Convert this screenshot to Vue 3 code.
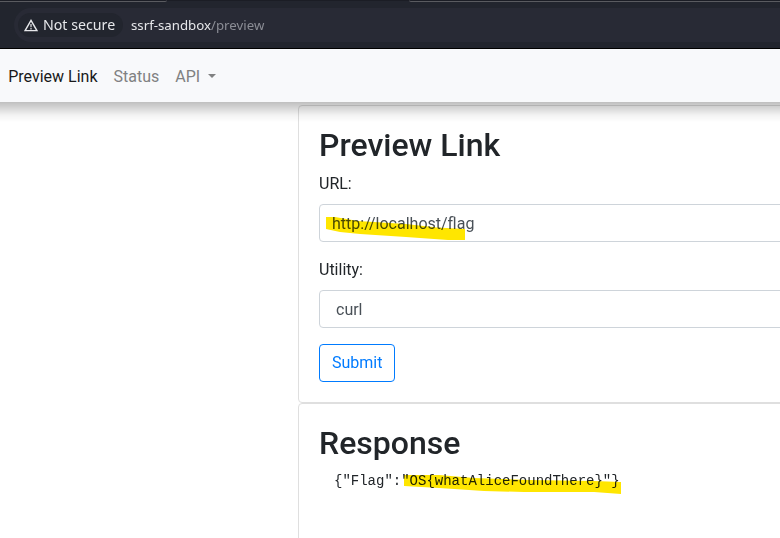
<script setup>
import { ref } from 'vue'

const url = ref('http://localhost/flag')
</script>

<template>
  <div class="window">
    <header class="chrome">
      <div class="tab-edge">
        <span class="edge left"></span>
        <span class="edge right"></span>
      </div>
      <div class="omnibox">
        <div class="chip">
          <svg width="14" height="13" viewBox="0 0 14 13" fill="none">
            <path d="M7 1.4 12.9 11.6H1.1Z" stroke="#e6e7ea" stroke-width="1.4" />
            <path d="M7 5v3.2M7 9v1.4" stroke="#c8c9cc" stroke-width="1.4" />
          </svg>
          <span>Not secure</span>
        </div>
        <div class="address">ssrf-sandbox<span>/preview</span></div>
      </div>
    </header>
    <nav class="navbar">
      <a class="active">Preview Link</a>
      <a>Status</a>
      <a class="dropdown">API</a>
    </nav>
    <main class="content">
      <section class="card">
        <h2>Preview Link</h2>
        <label>URL:</label>
        <div class="control">
          <span>{{ url }}</span>
          <svg class="marker" width="140" height="25" viewBox="0 0 140 25">
            <path d="M0 1 9 1 32 5 80 8 111 11.5 139 13V24L122 24 80 21 34 18 14 16 0 13Z" fill="#ffe600" />
          </svg>
        </div>
        <label>Utility:</label>
        <div class="control select"><span>curl</span></div>
        <button>Submit</button>
      </section>
      <section class="card response">
        <h2>Response</h2>
        <div class="output">
          <pre>{"Flag":"OS{whatAliceFoundThere}"}</pre>
          <svg class="marker flag" width="218" height="22" viewBox="0 0 218 22">
            <path d="M0 2 35 2 70 5 125 7 190 8 217 9V21L190 19 120 19 80 18 35 15 0 13Z" fill="#ffe600" />
          </svg>
        </div>
      </section>
    </main>
  </div>
</template>

<style>
body {
  margin: 0;
  overflow: hidden;
}
</style>

<style scoped>
* {
  box-sizing: border-box;
}
.window {
  width: 780px;
  height: 538px;
  overflow: hidden;
  background: #fff;
  color: #212529;
  font: 16px/24px Roboto, sans-serif;
}
.chrome {
  height: 49px;
  background: #22252e;
  border-bottom: 1px solid #000;
}
.tab-edge {
  height: 8px;
  display: flex;
  justify-content: space-between;
  background: linear-gradient(#1b1d25 1px, transparent 1px);
}
.edge {
  height: 2px;
  border-bottom: 1px solid #5a5b60;
}
.edge.left {
  width: 167px;
  border-bottom-right-radius: 4px;
}
.edge.right {
  width: 371px;
  border-bottom-left-radius: 4px;
}
.omnibox {
  height: 34px;
  margin-left: 14px;
  padding-left: 4px;
  display: flex;
  align-items: center;
  background: #282a35;
  border-radius: 17px 0 0 17px;
  font-family: "Noto Sans", sans-serif;
}
.chip {
  width: 105px;
  height: 24px;
  padding-left: 6px;
  display: flex;
  align-items: center;
  gap: 5px;
  background: #22252e;
  border-radius: 12px;
  color: #e6e7ea;
  font-size: 14.2px;
  white-space: nowrap;
}
.address {
  margin-left: 8px;
  color: #e6e7ea;
  font-size: 13.25px;
}
.address span {
  color: #8b8d95;
}
.navbar {
  position: relative;
  z-index: 1;
  height: 53px;
  padding: 3px 8.2px 0;
  display: flex;
  align-items: center;
  gap: 16px;
  background: #f8f9fb;
  color: #808182;
}
.navbar::before {
  content: "";
  position: absolute;
  left: 0;
  right: 0;
  top: 100%;
  height: 20px;
  background: linear-gradient(rgba(0, 0, 0, 0.25), rgba(0, 0, 0, 0.16) 30%, rgba(0, 0, 0, 0.05) 65%, transparent);
}
.active {
  color: #19191a;
}
.dropdown::after {
  content: "";
  display: inline-block;
  margin-left: 8px;
  vertical-align: 4px;
  border-top: 4.8px solid;
  border-left: 4.8px solid transparent;
  border-right: 4.8px solid transparent;
}
.content {
  width: 600px;
  margin: 3px 0 0 298px;
}
.card {
  padding: 20px;
  border: 1px solid #dfdfdf;
  border-radius: 4px;
}
.response {
  height: 180px;
}
h2 {
  margin: 0 0 8px;
  font-size: 32px;
  line-height: 38.4px;
  font-weight: 500;
}
label {
  display: block;
  margin-bottom: 8px;
}
.control {
  position: relative;
  height: 38px;
  margin-bottom: 16px;
  padding: 7px 12px 5px;
  border: 1px solid #ced4da;
  border-radius: 4px;
  color: #495057;
}
.select {
  padding-left: 16px;
}
.marker {
  position: absolute;
  left: 6px;
  top: 11px;
  mix-blend-mode: multiply;
}
button {
  display: block;
  height: 38px;
  padding: 6px 12px;
  border: 1px solid #007bff;
  border-radius: 4px;
  background: transparent;
  color: #007bff;
  font: inherit;
}
.output {
  position: relative;
  padding-left: 15px;
}
pre {
  margin: 0;
  font: 14px/21px "Liberation Mono", monospace;
}
.flag {
  left: 85px;
  top: 2px;
}
</style>
